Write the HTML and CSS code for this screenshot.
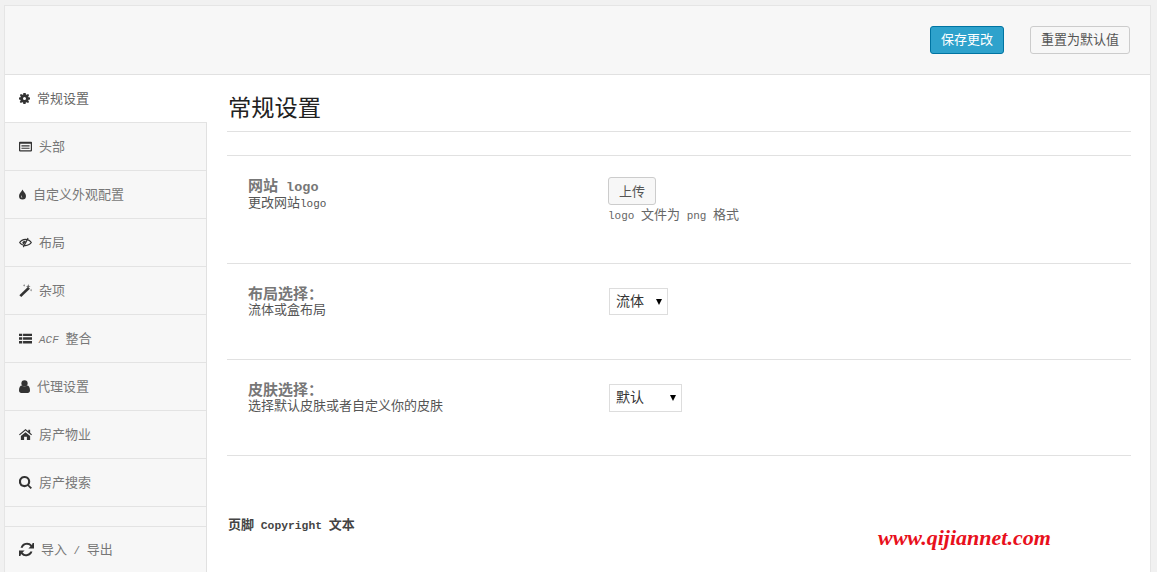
FILE: index.html
```html
<!DOCTYPE html>
<html lang="zh-CN">
<head>
<meta charset="utf-8">
<title>常规设置</title>
<link rel="stylesheet" href="styles.css">
</head>
<body>
<div class="panel">
  <header class="topbar">
    <button class="btn btn-primary">保存更改</button>
    <button class="btn btn-reset">重置为默认值</button>
  </header>
  <div class="main">
    <nav class="sidebar">
      <a class="nav-item active"><svg class="icon w11" viewBox="0 0 16 16"><path fill-rule="evenodd" d="M6.300 0h3.400l.4 2.200 1.200.5L13.100 1.300 14.700 2.900 13.400 5l.5 1.200 2.100.4v2.800l-2.100.4-.5 1.200 1.300 2.100-1.600 1.600-2-1.400-1.200.5-.4 2.200H6.300l-.4-2.200-1.200-.5-2 1.400-1.600-1.600 1.300-2.100-.5-1.200L0 9.400V6.600l2.100-.4.500-1.200-1.300-2.100 1.600-1.600 2 1.400 1.200-.5zM8 5.800a2.200 2.200 0 1 0 0 4.400 2.200 2.200 0 0 0 0-4.400z"/></svg><span>常规设置</span></a>
      <a class="nav-item"><svg class="icon w13" viewBox="0 0 16 12"><path fill-rule="evenodd" d="M1 0h14a1 1 0 0 1 1 1v10a1 1 0 0 1-1 1H1a1 1 0 0 1-1-1V1a1 1 0 0 1 1-1zM1.500 2.500v8h13v-8zM3 4h10v1H3zM3 6h10v1H3zM3 8h10v1H3z"/></svg><span>头部</span></a>
      <a class="nav-item"><svg class="icon w7" viewBox="0 0 10 14"><path fill-rule="evenodd" d="M5 0c1 2.500 5 5.500 5 9a5 5 0 0 1-10 0C0 5.500 4 2.500 5 0zM3.500 8C2.400 9.500 3 11.500 5 12c-1-1-1.500-2.500-1.500-4z"/></svg><span>自定义外观配置</span></a>
      <a class="nav-item"><svg class="icon w13" viewBox="0 0 16 12"><path fill-rule="evenodd" d="M8 1.500c3.400 0 6.500 2 8 4.500-1.500 2.500-4.600 4.500-8 4.500S1.500 8.500 0 6c1.500-2.500 4.600-4.500 8-4.500zM8 3C5.500 3 3.200 4.200 1.700 6 3.200 7.800 5.500 9 8 9s4.800-1.200 6.300-3C12.800 4.200 10.500 3 8 3z"/><path d="M10.500 0l1.300.8L6 12l-1.300-.8z"/><path d="M4 6a4 4 0 0 1 4.500-2L6 8.500A4 4 0 0 1 4 6z"/></svg><span>布局</span></a>
      <a class="nav-item"><svg class="icon w13" viewBox="0 0 14 14"><path d="M9.800 3l2 2L2.400 14 .4 12z"/><path fill="#666" d="M10 0l.6 1.900L12.500 2.500l-1.900.6L10 5l-.6-1.900L7.500 2.500l1.900-.6zM13 5l.4 1.100 .6.400-.6.400-.4 1.100-.4-1.100-.6-.4.600-.4zM5.500 0l.4 1.100 .6.400-.6.400-.4 1.100-.4-1.100-.6-.4.600-.4z"/></svg><span>杂项</span></a>
      <a class="nav-item"><svg class="icon w13" viewBox="0 0 16 12"><path d="M0 0h4v3H0zM5 0h11v3H5zM0 4.500h4v3H0zM5 4.500h11v3H5zM0 9h4v3H0zM5 9h11v3H5z"/></svg><span><span class="lat it">ACF </span>整合</span></a>
      <a class="nav-item"><svg class="icon w11" viewBox="0 0 12 14"><circle cx="6" cy="3.600" r="3.400"/><path d="M0 11c0-3 1.500-5 3-5 .8.600 1.800 1 3 1s2.200-.4 3-1c1.500 0 3 2 3 5 0 2-1 3-2.500 3h-7C1 14 0 13 0 11z"/></svg><span>代理设置</span></a>
      <a class="nav-item"><svg class="icon w13" viewBox="0 0 14 12"><path d="M7 0l3 2.500V1h2v3.200L14 6l-.8.900L7 1.800.8 6.900 0 6zM2 7.500l5-4 5 4V12H8.500V8.500h-3V12H2z"/></svg><span>房产物业</span></a>
      <a class="nav-item"><svg class="icon w13" viewBox="0 0 14 14"><path fill-rule="evenodd" d="M6 0a6 6 0 0 1 4.800 9.600L14 12.700 12.500 14l-3.100-3.200A6 6 0 1 1 6 0zm0 2.200a3.800 3.800 0 1 0 0 7.600 3.800 3.800 0 0 0 0-7.600z"/></svg><span>房产搜索</span></a>
      <div class="nav-gap"></div>
      <a class="nav-item last"><svg class="icon w15" viewBox="0 0 16 14"><path d="M14.500 0L16 0v6h-6l2.200-2.200A4.800 4.800 0 0 0 4 5H1.700A7 7 0 0 1 13.800 2.300zM1.500 14H0V8h6L3.800 10.200A4.800 4.800 0 0 0 12 9h2.300A7 7 0 0 1 2.200 11.700z"/></svg><span>导入<span class="lat"> / </span>导出</span></a>
    </nav>
    <main class="content">
      <h2 class="title">常规设置</h2>
      <section class="rows">
        <div class="row row-first">
          <div class="label">
            <div class="label-title">网站<span class="lat-b"> logo</span></div>
            <div class="label-desc">更改网站<span class="lat">logo</span></div>
          </div>
          <div class="control">
            <button class="btn-upload">上传</button>
            <div class="hint"><span class="lat">logo </span>文件为<span class="lat"> png </span>格式</div>
          </div>
        </div>
        <div class="row">
          <div class="label">
            <div class="label-title">布局选择：</div>
            <div class="label-desc">流体或盒布局</div>
          </div>
          <div class="control control-select"><span class="select narrow">流体</span></div>
        </div>
        <div class="row">
          <div class="label">
            <div class="label-title">皮肤选择：</div>
            <div class="label-desc">选择默认皮肤或者自定义你的皮肤</div>
          </div>
          <div class="control control-select"><span class="select wide">默认</span></div>
        </div>
      </section>
      <footer class="foot">页脚<span class="lat-b"> Copyright </span>文本</footer>
    </main>
  </div>
  <div class="watermark">www.qijiannet.com</div>
</div>
</body>
</html>
```
FILE: styles.css
```css
* { box-sizing: border-box; }
html, body { margin: 0; height: 100%; overflow: hidden; }
body {
  background: #f1f1f1;
  padding: 5px 6px 0 4px;
  font-family: "Noto Sans CJK SC", "Liberation Sans", sans-serif;
  font-size: 13px;
  color: #555;
}
.panel {
  position: relative;
  height: 567px;
  border: 1px solid #e5e5e5;
  border-bottom: 0;
  background: #fff;
  overflow: hidden;
}
.topbar {
  height: 69px;
  background: #f7f7f7;
  border-bottom: 1px solid #e1e1e1;
  display: flex;
  justify-content: flex-end;
  align-items: flex-start;
  padding: 20px 20px 0 0;
  gap: 26px;
}
.btn {
  height: 28px;
  border-radius: 3px;
  font: 13px/24px "Noto Sans CJK SC", sans-serif;
  padding: 0 0 2px;
}
.btn-primary {
  width: 74px;
  background: #2ea2cc;
  border: 1px solid #0074a2;
  color: #fff;
}
.btn-reset {
  width: 100px;
  background: #f7f7f7;
  border: 1px solid #ccc;
  color: #555;
}
.main { display: flex; height: 498px; }
.sidebar {
  width: 202px;
  flex: none;
  background: #f7f7f7;
  border-right: 1px solid #e1e1e1;
}
.nav-item {
  height: 48px;
  padding: 0 0 3px 14px;
  display: flex;
  align-items: center;
  gap: 7px;
  border-bottom: 1px solid #e3e3e3;
  color: #777;
  white-space: pre;
}
.nav-item.active {
  background: #fff;
  margin-right: -1px;
  position: relative;
  color: #666;
}
.nav-item.last { border-bottom: 0; height: 46px; }
.nav-gap { height: 20px; border-bottom: 1px solid #e3e3e3; }
.icon { flex: none; fill: #333; height: 13px; margin-top: 2px; }
.w7 { width: 7px; }
.w11 { width: 11px; }
.w13 { width: 13px; }
.w15 { width: 15px; height: 15px; }
.lat { font-family: "Liberation Mono", monospace; font-size: 11px; white-space: pre; }
.it { font-style: italic; }
.lat-b { font-family: "Liberation Mono", monospace; font-weight: 700; white-space: pre; }
.content { flex: 1; padding: 0 19px 0 20px; min-width: 0; }
.title {
  margin: 0;
  height: 57px;
  padding: 15px 0 0 1px;
  border-bottom: 1px solid #e1e1e1;
  font: 400 23.25px/32px "Noto Sans CJK SC", sans-serif;
  color: #222;
}
.rows { margin-top: 23px; border-top: 1px solid #e1e1e1; }
.row {
  height: 96px;
  border-bottom: 1px solid #e1e1e1;
  display: flex;
  padding: 20px 0 0 21px;
}
.row-first { height: 108px; }
.row-first .label-desc { margin-top: -2px; }
.label { width: 360px; flex: none; }
.label-title { font-size: 15px; font-weight: 700; line-height: 17px; color: #777; }
.label-desc { font-size: 13px; line-height: 16px; color: #555; }
.label-title .lat-b { font-size: 13.5px; }
.control { display: flex; flex-direction: column; align-items: flex-start; padding-top: 1px; }
.control-select { padding: 4px 0 0 1px; }
.btn-upload {
  width: 48px;
  height: 28px;
  padding: 0 0 2px;
  background: #f7f7f7;
  border: 1px solid #ccc;
  border-radius: 3px;
  font: 13px "Noto Sans CJK SC", sans-serif;
  color: #555;
}
.hint { font-size: 13px; line-height: 18px; color: #666; }
.select {
  position: relative;
  display: block;
  border: 1px solid #ddd;
  background: #fff;
  color: #333;
  padding-left: 6px;
  font-size: 14px;
}
.select::after {
  content: "";
  position: absolute;
  top: 50%;
  right: 5px;
  margin-top: -3px;
  border: 3.5px solid transparent;
  border-top: 6px solid #000;
  border-bottom: 0;
}
.narrow { width: 59px; height: 27px; line-height: 22px; }
.wide { width: 73px; height: 28px; line-height: 23px; }
.foot {
  margin: 59px 0 0 1px;
  font-weight: 700;
  font-size: 13px;
  line-height: 18px;
  color: #444;
}
.foot .lat-b { font-size: 11.33px; }
.watermark {
  position: absolute;
  left: 873px;
  top: 519px;
  font: italic 700 22px/26px "Liberation Serif", serif;
  color: #e8101c;
}
```
